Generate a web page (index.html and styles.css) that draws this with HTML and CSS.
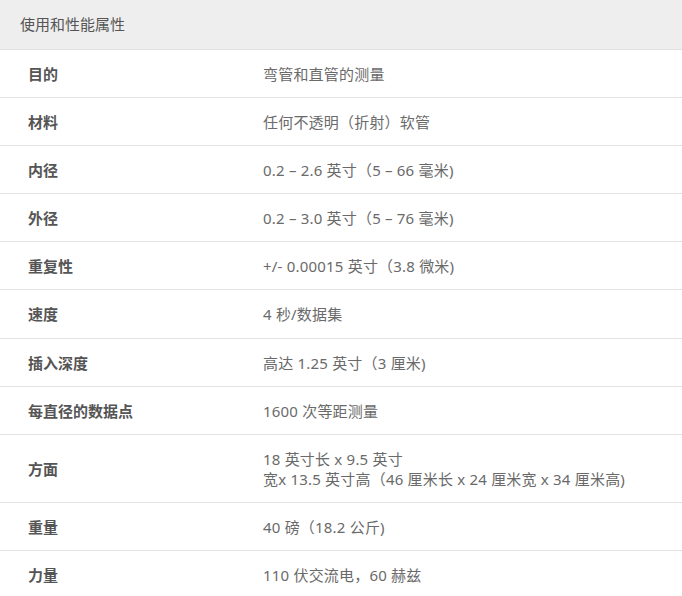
FILE: index.html
```html
<!DOCTYPE html>
<html lang="zh">
<head>
<meta charset="utf-8">
<link rel="stylesheet" href="styles.css">
</head>
<body>
<div class="spec">
  <div class="spec-head">使用和性能属性</div>
  <div class="row"><div class="label">目的</div><div class="value">弯管和直管的测量</div></div>
  <div class="row"><div class="label">材料</div><div class="value">任何不透明（折射）软管</div></div>
  <div class="row"><div class="label">内径</div><div class="value">0.2 – 2.6 英寸（5 – 66 毫米)</div></div>
  <div class="row"><div class="label">外径</div><div class="value">0.2 – 3.0 英寸（5 – 76 毫米)</div></div>
  <div class="row"><div class="label">重复性</div><div class="value">+/- 0.00015 英寸（3.8 微米)</div></div>
  <div class="row"><div class="label">速度</div><div class="value">4 秒/数据集</div></div>
  <div class="row"><div class="label">插入深度</div><div class="value">高达 1.25 英寸（3 厘米)</div></div>
  <div class="row"><div class="label">每直径的数据点</div><div class="value">1600 次等距测量</div></div>
  <div class="row"><div class="label">方面</div><div class="value">18 英寸长 x 9.5 英寸<br>宽x 13.5 英寸高（46 厘米长 x 24 厘米宽 x 34 厘米高)</div></div>
  <div class="row"><div class="label">重量</div><div class="value">40 磅（18.2 公斤)</div></div>
  <div class="row"><div class="label">力量</div><div class="value">110 伏交流电，60 赫兹</div></div>
</div>
</body>
</html>
```
FILE: styles.css
```css
html, body {
  margin: 0;
  padding: 0;
  background: #fff;
}
body {
  font-family: "Noto Sans", "Noto Sans CJK SC", sans-serif;
  font-size: 15px;
  color: #666;
}
.spec-head {
  background: #eeeeee;
  border-bottom: 1px solid #e2e2e2;
  height: 49.5px;
  box-sizing: border-box;
  padding-left: 20px;
  line-height: 48px;
  color: #555;
}
.row {
  display: flex;
  align-items: center;
  border-bottom: 1px solid #e2e2e2;
  padding: 14px 0 13.2px;
  line-height: 20px;
}
.label {
  width: 235px;
  padding-left: 28px;
  flex: none;
  font-weight: bold;
  color: #555;
}
.value {
  color: #6a6a6a;
  letter-spacing: 0.2px;
}
```
